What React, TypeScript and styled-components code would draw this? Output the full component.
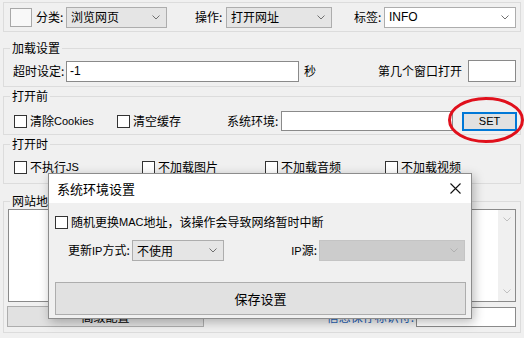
import React from "react";
import styled, { createGlobalStyle } from "styled-components";

const GlobalStyle = createGlobalStyle`
  body {
    margin: 0;
    background: #f0f0f0;
    font-family: "Noto Sans CJK SC", "Liberation Sans", sans-serif;
    font-size: 12px;
    line-height: 16px;
    color: #000;
  }
`;

const Page = styled.div`
  position: relative;
  width: 524px;
  height: 338px;
  overflow: hidden;
  background: #f0f0f0;
  display: flex;
  flex-direction: column;
  padding: 0 3px;
  box-sizing: border-box;
`;

const TopBar = styled.div`
  margin-top: 2px;
  height: 30px;
  box-sizing: border-box;
  border: 1px solid #dcdcdc;
  display: flex;
  align-items: center;
  padding-left: 6px;
`;

const Swatch = styled.div`
  width: 22px;
  height: 19px;
  box-sizing: border-box;
  border: 1px solid #a8a8a8;
  background: #f8f8f8;
  margin-right: 4px;
`;

const Label = styled.span<{ $w?: number; $ml?: number; $right?: boolean; $color?: string }>`
  display: inline-block;
  width: ${(p) => (p.$w ? `${p.$w}px` : "auto")};
  margin-left: ${(p) => p.$ml || 0}px;
  text-align: ${(p) => (p.$right ? "right" : "left")};
  color: ${(p) => p.$color || "#000"};
  white-space: nowrap;
  flex-shrink: 0;
`;

const Select = styled.div<{ $w: number; $white?: boolean; $disabled?: boolean }>`
  width: ${(p) => p.$w}px;
  height: 21px;
  box-sizing: border-box;
  border: 1px solid ${(p) => (p.$disabled ? "#c4c4c4" : "#adadad")};
  background: ${(p) => (p.$disabled ? "#cccccc" : p.$white ? "#fff" : "#e5e5e5")};
  display: flex;
  align-items: center;
  justify-content: space-between;
  padding: 0 6px 0 4px;
  flex-shrink: 0;
  font-family: ${(p) => (p.$white ? '"Liberation Sans", sans-serif' : "inherit")};
`;

const Chevron = ({ color = "#707070" }: { color?: string }) => (
  <svg width="8" height="5" viewBox="0 0 8 5">
    <polyline points="0.5,0.5 4,4 7.5,0.5" fill="none" stroke={color} strokeWidth="1" />
  </svg>
);

const GroupBox = styled.fieldset<{ $h: number; $mt: number }>`
  margin: ${(p) => p.$mt}px 0 0 0;
  height: ${(p) => p.$h}px;
  box-sizing: border-box;
  border: 1px solid #dcdcdc;
  padding: 0;
  min-width: 0;
`;

const Legend = styled.legend`
  margin-left: 6px;
  padding: 0 2px;
  font-size: 12px;
  line-height: 16px;
`;

const Row = styled.div<{ $pt: number; $pl: number; $pr?: number; $h?: number }>`
  display: flex;
  align-items: center;
  padding: ${(p) => p.$pt}px ${(p) => p.$pr || 0}px 0 ${(p) => p.$pl}px;
  height: ${(p) => (p.$h ? `${p.$h}px` : "auto")};
`;

const TextInput = styled.div<{ $w: number; $h?: number }>`
  width: ${(p) => p.$w}px;
  height: ${(p) => p.$h || 21}px;
  box-sizing: border-box;
  border: 1px solid #8a8a8a;
  background: #fff;
  padding-left: 3px;
  display: flex;
  align-items: center;
  font-family: "Liberation Sans", sans-serif;
  flex-shrink: 0;
`;

const CheckItem = styled.div<{ $w?: number }>`
  display: flex;
  align-items: center;
  width: ${(p) => (p.$w ? `${p.$w}px` : "auto")};
  flex-shrink: 0;
  white-space: nowrap;
`;

const Box = styled.span`
  width: 13px;
  height: 13px;
  box-sizing: border-box;
  border: 1px solid #333;
  background: #fff;
  margin-right: 3px;
  flex-shrink: 0;
`;

const Latin = styled.span`
  font-family: "Liberation Sans", sans-serif;
  font-size: 11px;
`;

const Button = styled.div<{ $w: number; $h: number; $focus?: boolean; $size?: number }>`
  width: ${(p) => p.$w}px;
  height: ${(p) => p.$h}px;
  box-sizing: border-box;
  background: #e1e1e1;
  border: 1px solid ${(p) => (p.$focus ? "#0078d7" : "#adadad")};
  box-shadow: ${(p) => (p.$focus ? "inset 0 0 0 1px #0078d7" : "none")};
  display: flex;
  align-items: center;
  justify-content: center;
  font-size: ${(p) => p.$size || 12}px;
  flex-shrink: 0;
`;

const TextArea = styled.div`
  margin: 0 4px;
  height: 93px;
  box-sizing: border-box;
  border: 1px solid #8a8a8a;
  background: #fff;
  display: flex;
  justify-content: flex-end;
`;

const ScrollBar = styled.div`
  width: 17px;
  background: #f0f0f0;
  display: flex;
  flex-direction: column;
  justify-content: space-between;
  align-items: center;
  padding: 7px 0;
`;

const Spacer = styled.div`
  flex: 1;
`;

const Annotation = styled.svg`
  position: absolute;
  left: 447px;
  top: 96px;
`;

const Dialog = styled.div`
  position: absolute;
  left: 48px;
  top: 173px;
  width: 424px;
  height: 146px;
  box-sizing: border-box;
  border: 1px solid #8c8c8c;
  background: #f0f0f0;
  box-shadow: 2px 3px 10px rgba(0, 0, 0, 0.28);
  display: flex;
  flex-direction: column;
`;

const TitleBar = styled.div`
  height: 29px;
  background: #fff;
  display: flex;
  align-items: center;
  justify-content: space-between;
  padding: 0 10px 0 8px;
  font-size: 13px;
`;

const DialogBody = styled.div`
  padding: 11px 0 0 6px;
  display: flex;
  flex-direction: column;
`;

export default function App() {
  return (
    <>
      <GlobalStyle />
      <Page>
        <TopBar>
          <Swatch />
          <Label $w={30}>分类:</Label>
          <Select $w={101}>
            浏览网页
            <Chevron />
          </Select>
          <Label $w={31} $ml={28}>操作:</Label>
          <Select $w={106}>
            打开网址
            <Chevron />
          </Select>
          <Label $w={30} $ml={22}>标签:</Label>
          <Select $w={132} $white>
            INFO
            <Chevron />
          </Select>
        </TopBar>

        <GroupBox $h={47} $mt={8}>
          <Legend>加载设置</Legend>
          <Row $pt={4} $pl={9} $pr={4}>
            <Label $w={53}>超时设定:</Label>
            <TextInput $w={233}>-1</TextInput>
            <Label $ml={5}>秒</Label>
            <Spacer />
            <Label>第几个窗口打开</Label>
            <TextInput $w={48} $h={22} style={{ marginLeft: 6 }} />
          </Row>
        </GroupBox>

        <GroupBox $h={47} $mt={1}>
          <Legend>打开前</Legend>
          <Row $pt={7} $pl={10} $h={20}>
            <CheckItem $w={103}>
              <Box />
              清除<Latin>Cookies</Latin>
            </CheckItem>
            <CheckItem $w={110}>
              <Box />
              清空缓存
            </CheckItem>
            <Label $w={54}>系统环境:</Label>
            <TextInput $w={172} $h={20} />
            <Button $w={55} $h={19} $focus style={{ marginLeft: 9 }}>
              <Latin>SET</Latin>
            </Button>
          </Row>
        </GroupBox>

        <GroupBox $h={48} $mt={1}>
          <Legend>打开时</Legend>
          <Row $pt={7} $pl={10}>
            <CheckItem $w={128}>
              <Box />
              不执行<Latin>JS</Latin>
            </CheckItem>
            <CheckItem $w={123}>
              <Box />
              不加载图片
            </CheckItem>
            <CheckItem $w={120}>
              <Box />
              不加载音频
            </CheckItem>
            <CheckItem>
              <Box />
              不加载视频
            </CheckItem>
          </Row>
        </GroupBox>

        <GroupBox $h={140} $mt={9}>
          <Legend>网站地址</Legend>
          <TextArea>
            <ScrollBar>
              <Chevron color="#c0c0c0" />
              <Chevron color="#c0c0c0" />
            </ScrollBar>
          </TextArea>
          <Row $pt={4} $pl={3} $pr={4}>
            <Button $w={197} $h={21}>高级配置</Button>
            <Spacer />
            <Label $color="#1f5fb4">信息保存标识符:</Label>
            <TextInput $w={100} $h={20} style={{ marginLeft: 2 }} />
          </Row>
        </GroupBox>

        <Annotation width="78" height="50" viewBox="0 0 78 50">
          <ellipse cx="39" cy="24" rx="36.5" ry="21.5" fill="none" stroke="#e0101c" strokeWidth="3" />
        </Annotation>

        <Dialog>
          <TitleBar>
            系统环境设置
            <svg width="11" height="11" viewBox="0 0 11 11">
              <path d="M0.5 0.5 L10.5 10.5 M10.5 0.5 L0.5 10.5" stroke="#111" strokeWidth="1.1" />
            </svg>
          </TitleBar>
          <DialogBody>
            <CheckItem>
              <Box />
              随机更换<Latin>MAC</Latin>地址，该操作会导致网络暂时中断
            </CheckItem>
            <Row $pt={10} $pl={13}>
              <Label $w={64}>更新<Latin>IP</Latin>方式:</Label>
              <Select $w={92}>
                不使用
                <Chevron />
              </Select>
              <Label $w={95} $right style={{ paddingRight: 2, boxSizing: "border-box" }}>
                <Latin>IP</Latin>源:
              </Label>
              <Select $w={146} $disabled>
                <span />
                <Chevron color="#b0b0b0" />
              </Select>
            </Row>
            <Button $w={411} $h={33} $size={13} style={{ marginTop: 21 }}>
              保存设置
            </Button>
          </DialogBody>
        </Dialog>
      </Page>
    </>
  );
}
